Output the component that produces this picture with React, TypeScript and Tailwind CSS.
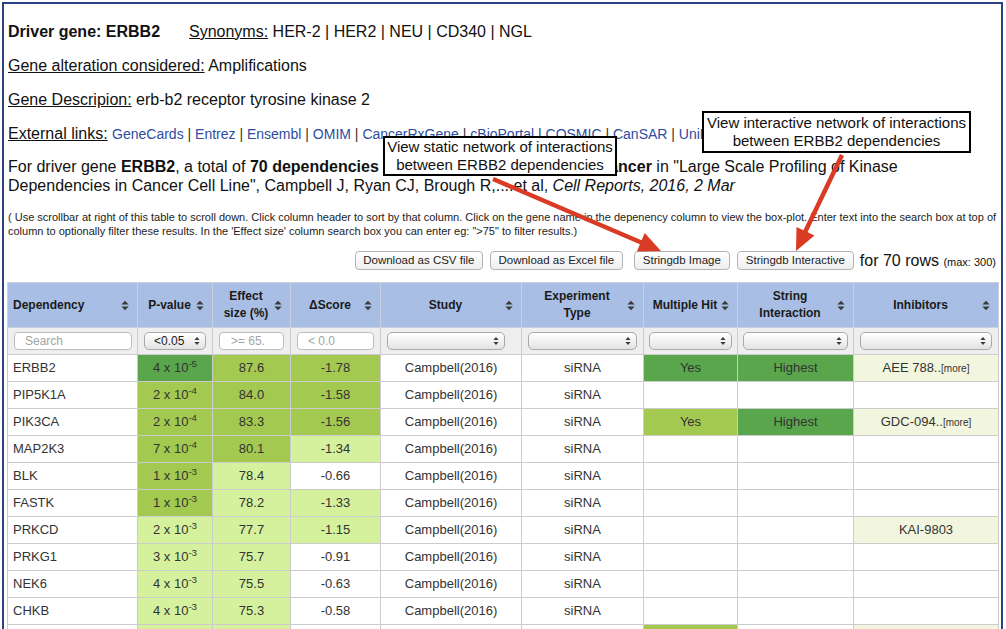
import React from "react";

const font = "font-['Liberation_Sans',Arial,Helvetica,sans-serif]";

type C = "dark" | "mid" | "light" | "none";
const bg: Record<C, string> = {
  dark: "bg-[#5aa64c]",
  mid: "bg-[#a3c950]",
  light: "bg-[#d5f19d]",
  none: "bg-white",
};

type Row = {
  dep: string;
  p?: [string, string];
  pc: C;
  e?: string;
  ec: C;
  d?: string;
  dc: C;
  study?: boolean;
  mh?: string;
  mhc: C;
  si?: string;
  sic: C;
  inh?: string;
  more?: boolean;
  inhBg?: boolean;
};

const rows: Row[] = [
  { dep: "ERBB2", p: ["4", "-5"], pc: "dark", e: "87.6", ec: "mid", d: "-1.78", dc: "mid", study: true, mh: "Yes", mhc: "dark", si: "Highest", sic: "dark", inh: "AEE 788..", more: true, inhBg: true },
  { dep: "PIP5K1A", p: ["2", "-4"], pc: "mid", e: "84.0", ec: "mid", d: "-1.58", dc: "mid", study: true, mhc: "none", sic: "none" },
  { dep: "PIK3CA", p: ["2", "-4"], pc: "mid", e: "83.3", ec: "mid", d: "-1.56", dc: "mid", study: true, mh: "Yes", mhc: "mid", si: "Highest", sic: "dark", inh: "GDC-094..", more: true, inhBg: true },
  { dep: "MAP2K3", p: ["7", "-4"], pc: "mid", e: "80.1", ec: "mid", d: "-1.34", dc: "light", study: true, mhc: "none", sic: "none" },
  { dep: "BLK", p: ["1", "-3"], pc: "mid", e: "78.4", ec: "light", d: "-0.66", dc: "none", study: true, mhc: "none", sic: "none" },
  { dep: "FASTK", p: ["1", "-3"], pc: "mid", e: "78.2", ec: "light", d: "-1.33", dc: "light", study: true, mhc: "none", sic: "none" },
  { dep: "PRKCD", p: ["2", "-3"], pc: "light", e: "77.7", ec: "light", d: "-1.15", dc: "light", study: true, mhc: "none", sic: "none", inh: "KAI-9803", inhBg: true },
  { dep: "PRKG1", p: ["3", "-3"], pc: "light", e: "75.7", ec: "light", d: "-0.91", dc: "none", study: true, mhc: "none", sic: "none" },
  { dep: "NEK6", p: ["4", "-3"], pc: "light", e: "75.5", ec: "light", d: "-0.63", dc: "none", study: true, mhc: "none", sic: "none" },
  { dep: "CHKB", p: ["4", "-3"], pc: "light", e: "75.3", ec: "light", d: "-0.58", dc: "none", study: true, mhc: "none", sic: "none" },
  { dep: "", pc: "light", ec: "light", dc: "none", mhc: "mid", sic: "none", inhBg: true },
];

function SortIcon() {
  return (
    <svg width="8" height="11" viewBox="0 0 8 11" className="shrink-0">
      <path d="M4 0.8 L7.6 4.6 H0.4 Z M4 10.2 L7.6 6.4 H0.4 Z" fill="#3a3a3a" />
    </svg>
  );
}

function SelArrow() {
  return (
    <svg width="6" height="10" viewBox="0 0 6 10" className="shrink-0">
      <path d="M3 1 L5.6 4 H0.4 Z M3 9 L5.6 6 H0.4 Z" fill="#3a3a3a" />
    </svg>
  );
}

function Sel({ text }: { text?: string }) {
  return (
    <div className="flex h-[18px] items-center justify-between rounded-[5px] border border-[#a9a9a9] bg-linear-to-b from-[#ffffff] to-[#e3e3e3] pl-[9px] pr-[5px] text-[12px] leading-none text-[#222]">
      <span>{text ?? ""}</span>
      <SelArrow />
    </div>
  );
}

function Inp({ ph, pl }: { ph: string; pl: string }) {
  return (
    <input
      readOnly
      placeholder={ph}
      className={`block h-[18px] w-full rounded-[4px] border border-[#bdbdbd] bg-white ${pl} text-[12px] leading-none text-[#222] outline-none placeholder:text-[#a3a3a3]`}
    />
  );
}

function Th({ children, left }: { children: React.ReactNode; left?: boolean }) {
  return (
    <th className="border border-[#c9d1df] bg-[#a8bee4] p-0 align-middle text-[12px] font-bold leading-[17px] text-[#1a1a1a]">
      <div className="flex items-center pl-[5px] pr-[8px]">
        <div className={left ? "flex-1 text-left" : "flex-1 text-center"}>{children}</div>
        <SortIcon />
      </div>
    </th>
  );
}

const td = "border border-[#cccccc] p-0 text-center align-middle text-[13px] text-[#333]";
const fd = "border border-[#cccccc] bg-[#eeeeee] py-0 align-middle";

function Sep() {
  return <span className="text-[#333]"> | </span>;
}

export default function App() {
  const links = ["GeneCards", "Entrez", "Ensembl", "OMIM", "CancerRxGene", "cBioPortal", "COSMIC", "CanSAR", "UniProt"];
  return (
    <div className={`relative h-[629px] w-[1006px] overflow-hidden bg-white text-[#111] ${font}`}>
      <div className="ml-[2px] mt-[2px] w-[1001px] border-2 border-b-0 border-[#2c4283] px-[3px] pb-[20px] pt-[18px]">
        <div className="pl-[1px] text-[16px] leading-[19px]">
          <p className="whitespace-nowrap">
            <span className="inline-block w-[181px] font-bold">Driver gene: ERBB2</span>
            <span className="underline">Synonyms:</span> HER-2 | HER2 | NEU | CD340 | NGL
          </p>
          <p className="mt-[15px] whitespace-nowrap">
            <span className="underline">Gene alteration considered:</span> Amplifications
          </p>
          <p className="mt-[15px] whitespace-nowrap">
            <span className="underline">Gene Descripion:</span> erb-b2 receptor tyrosine kinase 2
          </p>
          <p className="mt-[15px] whitespace-nowrap">
            <span className="underline">External links:</span>{" "}
            <span className="text-[14px]">
              {links.map((l, i) => (
                <React.Fragment key={l}>
                  {i > 0 && <Sep />}
                  <span className="text-[#2d4c9f]">{l}</span>
                </React.Fragment>
              ))}
            </span>
          </p>
          <p className="mt-[13px] whitespace-nowrap">
            For driver gene <b>ERBB2</b>, a total of <b>70 dependencies</b> were found in <b>all tissues Pan-cancer</b> in "Large Scale Profiling of Kinase
            <br />
            Dependencies in Cancer Cell Line", Campbell J, Ryan CJ, Brough R,....et al, <i>Cell Reports, 2016, 2 Mar</i>
          </p>
        </div>

        <p className="mt-[15px] whitespace-nowrap pl-[1px] text-[11px] leading-[14px] text-[#222]">
          ( Use scrollbar at right of this table to scroll down. Click column header to sort by that column. Click on the gene name in the depenency column to view the box-plot. Enter text into the search box at top of
          <br />
          column to optionally filter these results. In the 'Effect size' column search box you can enter eg: "&gt;75" to filter results.)
        </p>

        <div className="mt-[13px] flex h-[19px] items-center justify-end pr-[2px]">
          <button className="h-[19px] w-[128px] rounded-[4px] border border-[#b3b3b3] bg-linear-to-b from-white to-[#eeeeee] text-[11.5px] leading-none text-[#222]">
            Download as CSV file
          </button>
          <button className="ml-[7px] h-[19px] w-[133px] rounded-[4px] border border-[#b3b3b3] bg-linear-to-b from-white to-[#eeeeee] text-[11.5px] leading-none text-[#222]">
            Download as Excel file
          </button>
          <button className="ml-[11px] h-[19px] w-[96px] rounded-[4px] border border-[#b3b3b3] bg-linear-to-b from-white to-[#eeeeee] text-[11.5px] leading-none text-[#222]">
            Stringdb Image
          </button>
          <button className="ml-[7px] h-[19px] w-[117px] rounded-[4px] border border-[#b3b3b3] bg-linear-to-b from-white to-[#eeeeee] text-[11.5px] leading-none text-[#222]">
            Stringdb Interactive
          </button>
          <span className="ml-[6px] whitespace-nowrap text-[16px] text-[#111]">
            for 70 rows <span className="text-[11px]">(max: 300)</span>
          </span>
        </div>

        <table className="mt-[12px] w-[991px] table-fixed border-collapse">
          <colgroup>
            <col className="w-[130px]" />
            <col className="w-[75px]" />
            <col className="w-[78px]" />
            <col className="w-[90px]" />
            <col className="w-[141px]" />
            <col className="w-[122px]" />
            <col className="w-[94px]" />
            <col className="w-[116px]" />
            <col className="w-[145px]" />
          </colgroup>
          <thead>
            <tr className="h-[45px]">
              <Th left>Dependency</Th>
              <Th>P-value</Th>
              <Th>
                Effect
                <br />
                size (%)
              </Th>
              <Th>ΔScore</Th>
              <Th>Study</Th>
              <Th>
                Experiment
                <br />
                Type
              </Th>
              <Th>Multiple Hit</Th>
              <Th>
                String
                <br />
                Interaction
              </Th>
              <Th>Inhibitors</Th>
            </tr>
            <tr className="h-[27px]">
              <td className={`${fd} pl-[6px] pr-[5px]`}>
                <Inp ph="Search" pl="pl-[10px]" />
              </td>
              <td className={`${fd} px-[6px]`}>
                <Sel text="<0.05" />
              </td>
              <td className={`${fd} px-[6px]`}>
                <Inp ph=">= 65." pl="pl-[11px]" />
              </td>
              <td className={`${fd} px-[6px]`}>
                <Inp ph="< 0.0" pl="pl-[10px]" />
              </td>
              <td className={`${fd} pl-[6px] pr-[16px]`}>
                <Sel />
              </td>
              <td className={`${fd} px-[6px]`}>
                <Sel />
              </td>
              <td className={`${fd} px-[5px]`}>
                <Sel />
              </td>
              <td className={`${fd} px-[5px]`}>
                <Sel />
              </td>
              <td className={`${fd} px-[6px]`}>
                <Sel />
              </td>
            </tr>
          </thead>
          <tbody>
            {rows.map((r, i) => (
              <tr key={i} className="h-[27px]">
                <td className={`${td} bg-white pl-[5px] text-left`}>{r.dep}</td>
                <td className={`${td} ${bg[r.pc]}`}>
                  {r.p && (
                    <>
                      {r.p[0]} x 10<sup>{r.p[1]}</sup>
                    </>
                  )}
                </td>
                <td className={`${td} ${bg[r.ec]}`}>{r.e ?? ""}</td>
                <td className={`${td} ${bg[r.dc]}`}>{r.d ?? ""}</td>
                <td className={`${td} bg-white text-[#2d3f8e]`}>{r.study ? "Campbell(2016)" : ""}</td>
                <td className={`${td} bg-white`}>{r.study ? "siRNA" : ""}</td>
                <td className={`${td} ${bg[r.mhc]}`}>{r.mh ?? ""}</td>
                <td className={`${td} ${bg[r.sic]} text-[#2e3f96]`}>{r.si ?? ""}</td>
                <td className={`${td} ${r.inhBg ? "bg-[#f3f6de]" : "bg-white"} text-[#2d3f8e]`}>
                  {r.inh ?? ""}
                  {r.more && <span className="text-[10px]">[more]</span>}
                </td>
              </tr>
            ))}
          </tbody>
        </table>
      </div>

      <div className="absolute left-[383px] top-[136px] w-[234px] border-2 border-black bg-white text-center text-[15px] leading-[18px] text-[#111]">
        View static network of interactions
        <br />
        between ERBB2 dependencies
      </div>
      <div className="absolute left-[702px] top-[111px] w-[269px] border-2 border-black bg-white py-[1px] text-center text-[15px] leading-[18px] text-[#111]">
        View interactive network of interactions
        <br />
        between ERBB2 dependencies
      </div>

      <svg className="pointer-events-none absolute left-0 top-0" width="1006" height="629" viewBox="0 0 1006 629">
        <line x1="493" y1="179" x2="643" y2="243.2" stroke="#d93b24" strokeWidth="4.5" />
        <polygon points="661,251 636.9,251.5 644.7,233.1" fill="#d93b24" />
        <line x1="842" y1="155" x2="804.6" y2="233" stroke="#d93b24" strokeWidth="4.5" />
        <polygon points="796,251 796.5,226.9 814.5,235.5" fill="#d93b24" />
      </svg>
    </div>
  );
}
